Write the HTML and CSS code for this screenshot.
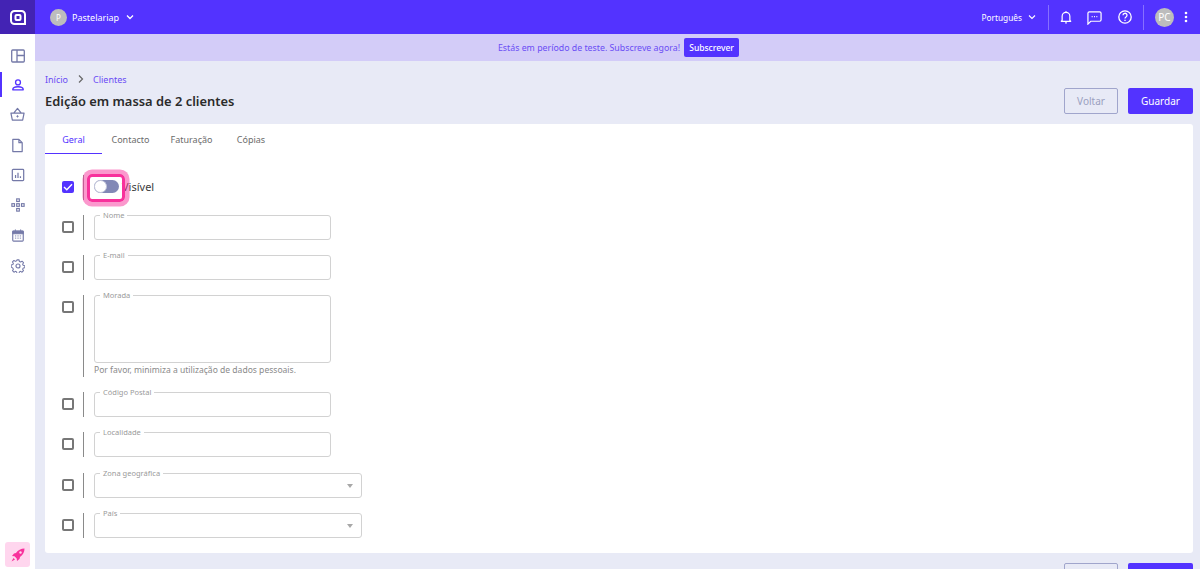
FILE: index.html
```html
<!DOCTYPE html>
<html lang="pt">
<head>
    <meta charset="UTF-8">
    <meta name="viewport" content="width=device-width, initial-scale=1.0">
    <title>Clientes</title>
    <link rel="stylesheet" href="styles.css">
</head>
<body>
    <header class="topbar">
        <div class="logo">
            <svg width="16" height="15" viewBox="0 0 16 15"><path d="M4.500 1h7A3.500 3.500 0 0 1 15 4.500V14H4.500A3.500 3.500 0 0 1 1 10.500v-6A3.500 3.500 0 0 1 4.500 1z" fill="none" stroke="#fff" stroke-width="2"/><rect x="5.500" y="5" width="5" height="5" rx="1" fill="none" stroke="#fff" stroke-width="2"/></svg>
        </div>
        <div class="store">
            <span class="avatar avatar-small">P</span>
            <span>Pastelariap</span>
            <svg class="chevron" width="10" height="10" viewBox="0 0 10 10"><path d="M2 3.500l3 3 3-3" fill="none" stroke="#fff" stroke-width="1.300"/></svg>
        </div>
        <div class="topbar-right">
            <span class="lang">Português</span>
            <svg class="chevron lang-chevron" width="10" height="10" viewBox="0 0 10 10"><path d="M2 3.500l3 3 3-3" fill="none" stroke="#fff" stroke-width="1.100"/></svg>
            <span class="divider"></span>
            <svg class="top-icon" width="12" height="14" viewBox="0 0 14 16"><path d="M2.500 12V7a4.500 4.500 0 0 1 9 0v5l1 1h-11z" fill="none" stroke="#fff" stroke-width="1.400" stroke-linejoin="round"/><path d="M6 14.800h2M7 1v1" stroke="#fff" stroke-width="1.400"/></svg>
            <svg class="top-icon" width="15" height="15" viewBox="0 0 16 16"><path d="M2.500 2h11A1.500 1.500 0 0 1 15 3.500v7a1.500 1.500 0 0 1-1.500 1.500H4l-3 3V3.500A1.500 1.500 0 0 1 2.500 2z" fill="none" stroke="#fff" stroke-width="1.300"/><path d="M5 7h1M7.500 7h1M10 7h1" stroke="#fff" stroke-width="1.300"/></svg>
            <svg class="top-icon top-icon-last" width="16" height="16" viewBox="0 0 16 16"><circle cx="8" cy="8" r="6.200" fill="none" stroke="#fff" stroke-width="1.300"/><path d="M6 6.300a2 2 0 1 1 3 1.700c-.7.400-1 .8-1 1.500" fill="none" stroke="#fff" stroke-width="1.300"/><path d="M8 10.800v1.200" stroke="#fff" stroke-width="1.300"/></svg>
            <span class="divider divider-user"></span>
            <span class="avatar avatar-user">PC</span>
            <svg class="dots" width="4" height="12" viewBox="0 0 4 12"><circle cx="2" cy="2" r="1.300" fill="#fff"/><circle cx="2" cy="6" r="1.300" fill="#fff"/><circle cx="2" cy="10" r="1.300" fill="#fff"/></svg>
        </div>
    </header>

    <div class="layout">
        <nav class="sidebar">
            <a class="nav-item nav-first"><svg width="14" height="14" viewBox="0 0 14 14"><rect x=".700" y="1" width="12.600" height="12" rx="1" fill="none" stroke="#7479a8" stroke-width="1.300"/><path d="M6 1v12M6 6.500h7.300" stroke="#7479a8" stroke-width="1.300"/></svg></a>
            <a class="nav-item active"><svg width="14" height="14" viewBox="0 0 16 16"><circle cx="8" cy="5" r="2.800" fill="none" stroke="#5333ff" stroke-width="1.500"/><path d="M2 13.500c0-2.500 2.500-3.500 6-3.500s6 1 6 3.500z" fill="none" stroke="#5333ff" stroke-width="1.500" stroke-linejoin="round"/></svg></a>
            <a class="nav-item"><svg width="15" height="15" viewBox="0 0 16 16"><path d="M1 6.500h14l-1.500 7.500h-11zM4 6.500L8 1.500l4 5" fill="none" stroke="#7479a8" stroke-width="1.300" stroke-linejoin="round"/><path d="M6.800 10h2.400M8 8.800v2.400" stroke="#7479a8"/></svg></a>
            <a class="nav-item"><svg width="15" height="15" viewBox="0 0 16 16"><path d="M3 1.500h6.500L13 5v9.500H3zM9.500 1.500V5H13" fill="none" stroke="#7479a8" stroke-width="1.300" stroke-linejoin="round"/></svg></a>
            <a class="nav-item"><svg width="14" height="14" viewBox="0 0 16 16"><rect x="1.500" y="1.500" width="13" height="13" rx="1" fill="none" stroke="#7479a8" stroke-width="1.400"/><path d="M5.200 11.500V8M8 11.500v-6M10.800 11.500V9.500" stroke="#7479a8" stroke-width="1.400"/></svg></a>
            <a class="nav-item"><svg width="14" height="14" viewBox="0 0 16 16"><g fill="none" stroke="#7479a8" stroke-width="1.300"><rect x="6.500" y="1" width="3" height="3"/><rect x="1" y="6.500" width="3" height="3"/><rect x="6.500" y="6.500" width="3" height="3"/><rect x="12" y="6.500" width="3" height="3"/><rect x="6.500" y="12" width="3" height="3"/></g></svg></a>
            <a class="nav-item"><svg width="14" height="15" viewBox="0 0 16 16"><rect x="2" y="3" width="12" height="11.500" rx="1" fill="none" stroke="#7479a8" stroke-width="1.300"/><path d="M2 3h12v3H2zM5 1v2M11 1v2" fill="#7479a8" stroke="#7479a8"/><path d="M4.500 8.500h1.500M7.300 8.500h1.500M10 8.500h1.500M4.500 11h1.500M7.300 11h1.500M10 11h1.500" stroke="#7479a8"/></svg></a>
            <a class="nav-item"><svg width="14" height="14" viewBox="0 0 16 16"><circle cx="8" cy="8" r="2.300" fill="none" stroke="#7479a8" stroke-width="1.300"/><path d="M6.800 1h2.400l.4 1.900 1.300.6 1.700-1 1.700 1.700-1 1.700.6 1.300 1.900.4v2.400l-1.900.4-.6 1.300 1 1.700-1.700 1.700-1.700-1-1.300.6-.4 1.900H6.800l-.4-1.900-1.300-.6-1.700 1-1.700-1.700 1-1.700-.6-1.300L.2 9.200V6.800l1.900-.4.600-1.300-1-1.700 1.700-1.700 1.700 1 1.300-.6z" fill="none" stroke="#7479a8" stroke-width="1.200" stroke-linejoin="round"/></svg></a>
            <div class="rocket">
                <svg width="14" height="14" viewBox="0 0 14 14"><path d="M13.500.5c-3.500 0-6.500 1.500-8.500 4.500L3 5.500 1 8l2.500.3 2.200 2.200L6 13l2.500-2 .5-2c3-2 4.500-5 4.500-8.500z" fill="#f8319c"/><path d="M2.500 10L.5 13.500 4 11.500z" fill="#f8319c"/><circle cx="9.500" cy="4.500" r="1.200" fill="#ffd6ee"/></svg>
            </div>
        </nav>

        <div class="page">
            <div class="trial">
                <span>Estás em período de teste. Subscreve agora!</span>
                <button class="subscribe">Subscrever</button>
            </div>

            <main class="content">
                <div class="breadcrumb">
                    <span>Início</span>
                    <svg width="8" height="8" viewBox="0 0 8 8"><path d="M2 .5L5.500 4 2 7.500" fill="none" stroke="#666" stroke-width="1.200"/></svg>
                    <span>Clientes</span>
                </div>
                <div class="title-row">
                    <h1>Edição em massa de 2 clientes</h1>
                    <div class="actions">
                        <button class="btn btn-back">Voltar</button>
                        <button class="btn btn-save">Guardar</button>
                    </div>
                </div>

                <section class="card">
                    <div class="tabs">
                        <span class="tab active">Geral</span>
                        <span class="tab">Contacto</span>
                        <span class="tab">Faturação</span>
                        <span class="tab">Cópias</span>
                    </div>
                    <div class="form">
                        <div class="row row-toggle">
                            <span class="check checked"><svg width="10" height="8" viewBox="0 0 10 8"><path d="M1 4l2.800 2.800L9 1.200" fill="none" stroke="#fff" stroke-width="1.400"/></svg></span>
                            <span class="sep"></span>
                            <span class="toggle"><span class="knob"></span></span>
                            <span class="toggle-label">Visível</span>
                            <span class="spot"></span>
                        </div>
                        <div class="row">
                            <span class="check"></span><span class="sep"></span>
                            <div class="field"><label>Nome</label></div>
                        </div>
                        <div class="row">
                            <span class="check"></span><span class="sep"></span>
                            <div class="field"><label>E-mail</label></div>
                        </div>
                        <div class="row row-tall">
                            <span class="check"></span><span class="sep"></span>
                            <div class="field-group">
                                <div class="field field-area"><label>Morada</label></div>
                                <p class="hint">Por favor, minimiza a utilização de dados pessoais.</p>
                            </div>
                        </div>
                        <div class="row">
                            <span class="check"></span><span class="sep"></span>
                            <div class="field"><label>Código Postal</label></div>
                        </div>
                        <div class="row row-loose">
                            <span class="check"></span><span class="sep"></span>
                            <div class="field"><label>Localidade</label></div>
                        </div>
                        <div class="row">
                            <span class="check"></span><span class="sep"></span>
                            <div class="field field-select"><label>Zona geográfica</label><i class="caret"></i></div>
                        </div>
                        <div class="row">
                            <span class="check"></span><span class="sep"></span>
                            <div class="field field-select"><label>País</label><i class="caret"></i></div>
                        </div>
                    </div>
                </section>

                <div class="actions actions-bottom">
                    <button class="btn btn-back">Voltar</button>
                    <button class="btn btn-save">Guardar</button>
                </div>
            </main>
        </div>
    </div>
</body>
</html>
```

FILE: styles.css
```css
* {
    box-sizing: border-box;
}

body {
    margin: 0;
    height: 100vh;
    overflow: hidden;
    display: flex;
    flex-direction: column;
    background: #e8eaf6;
    color: #2b2b2b;
    font-family: "Noto Sans", sans-serif;
    font-size: 9px;
}

/* Barra de cima */
.topbar {
    height: 34px;
    flex: none;
    display: flex;
    align-items: center;
    background: #5333ff;
    color: #fff;
}

.logo {
    width: 35px;
    height: 34px;
    display: flex;
    align-items: center;
    justify-content: center;
    background: #4323b4;
}

.store {
    display: flex;
    align-items: center;
    margin-left: 15px;
    font-size: 9px;
}

.avatar {
    display: flex;
    align-items: center;
    justify-content: center;
    border-radius: 50%;
    background: #bdbdbd;
    color: #fff;
}

.avatar-small {
    width: 17px;
    height: 17px;
    margin-right: 5px;
    font-size: 8px;
}

.chevron {
    margin-left: 6px;
}

.topbar-right {
    margin-left: auto;
    display: flex;
    align-items: center;
    padding-right: 12px;
}

.lang {
    font-size: 8.300px;
}

.lang-chevron {
    margin-left: 5px;
}

.divider {
    width: 1px;
    height: 25px;
    background: rgba(255, 255, 255, 0.3);
    margin: 0 11px;
}

.divider-user {
    margin: 0 11px 0 10px;
}

.top-icon {
    margin-right: 15px;
}

.top-icon-last {
    margin-right: 0;
}

.avatar-user {
    width: 19px;
    height: 19px;
    font-size: 10px;
    margin-right: 10px;
}

.dots {
    display: block;
}

.layout {
    flex: 1;
    min-height: 0;
    display: flex;
}

/* Menu lateral */
.sidebar {
    width: 35px;
    flex: none;
    display: flex;
    flex-direction: column;
    align-items: center;
    padding-top: 8px;
    gap: 5.200px;
    background: #fff;
}

.nav-item {
    width: 100%;
    height: 25px;
    display: flex;
    align-items: center;
    justify-content: center;
}

.nav-first {
    padding-top: 3px;
}

.nav-item.active {
    border-left: 2px solid #5333ff;
    padding-right: 2px;
}

.rocket {
    margin-top: auto;
    margin-bottom: 2px;
    width: 25px;
    height: 25px;
    display: flex;
    align-items: center;
    justify-content: center;
    border-radius: 3px;
    background: #ffd6ee;
}

.page {
    flex: 1;
    min-width: 0;
}

/* Aviso de teste */
.trial {
    height: 27px;
    display: flex;
    align-items: center;
    justify-content: center;
    gap: 4px;
    padding-left: 2px;
    background: #d3ccf8;
    color: #6a4cf5;
    font-size: 8.800px;
}

.subscribe {
    height: 19px;
    width: 55px;
    padding: 0;
    border: none;
    border-radius: 2px;
    background: #5333ff;
    color: #fff;
    font-family: inherit;
    font-size: 8.500px;
    font-weight: 500;
}

/* Contenido */
.content {
    padding: 12px 7px 0 10px;
}

.breadcrumb {
    display: flex;
    align-items: center;
    gap: 8.500px;
    height: 12px;
    color: #6a4cf5;
    font-size: 9px;
}

.title-row {
    display: flex;
    justify-content: space-between;
    align-items: center;
    height: 26px;
    margin-top: 3px;
}

h1 {
    margin: 0;
    font-size: 12.900px;
    font-weight: 600;
    color: #2b2b2b;
}

.actions {
    display: flex;
    gap: 10px;
}

.btn {
    height: 26px;
    padding: 0;
    border-radius: 2px;
    font-family: inherit;
    font-size: 10px;
}

.btn-back {
    width: 54px;
    border: 1px solid #a0a5cc;
    background: transparent;
    color: #9a9fc0;
}

.btn-save {
    width: 65px;
    border: none;
    background: #5333ff;
    color: #fff;
}

.actions-bottom {
    justify-content: flex-end;
    margin-top: 10px;
}

.card {
    margin-top: 10px;
    height: 429px;
    background: #fff;
    border-radius: 3px;
}

.tabs {
    display: flex;
    height: 30px;
    color: #6b6b6b;
    font-size: 9px;
}

.tab {
    width: 57px;
    display: flex;
    align-items: center;
    justify-content: center;
    padding-top: 1px;
    border-bottom: 1px solid transparent;
    white-space: nowrap;
}

.tab:nth-child(3) {
    width: 65px;
}

.tab:nth-child(4) {
    width: 54px;
}

.tab.active {
    color: #5333ff;
    border-bottom-color: #5333ff;
}

.form {
    padding: 26px 0 0 17px;
}

.row {
    position: relative;
    display: flex;
    align-items: flex-start;
    margin-bottom: 15px;
}

.row-toggle {
    height: 20px;
    margin-top: -3px;
    margin-bottom: 18px;
    align-items: center;
}

.row-loose {
    margin-bottom: 16px;
}

.check {
    width: 12px;
    height: 12px;
    flex: none;
    margin-top: 6px;
    display: flex;
    align-items: center;
    justify-content: center;
    border: 2px solid #777;
    border-radius: 2px;
    background: #fff;
}

.row-toggle .check {
    margin-top: 0;
}

.check.checked {
    border: none;
    background: #5333ff;
}

.sep {
    width: 1px;
    height: 25px;
    flex: none;
    margin: 0 10px 0 9px;
    background: #8a8a8a;
}

.row-tall .sep {
    height: 82px;
}

.toggle {
    width: 25px;
    height: 13px;
    margin-bottom: 1px;
    position: relative;
    border-radius: 7px;
    background: #8288b6;
}

.knob {
    position: absolute;
    left: 0;
    top: 0;
    width: 13px;
    height: 13px;
    border-radius: 50%;
    background: #fff;
    border: 1px solid #c5c8dc;
}

.toggle-label {
    margin-left: 3px;
    margin-bottom: 2px;
    font-size: 11px;
    color: #3c3c3c;
}

/* Resalte sobre el interruptor */
.spot {
    position: absolute;
    left: 25px;
    top: -3px;
    width: 38px;
    height: 28px;
    border: 3px solid #f8319c;
    border-radius: 5px;
    box-shadow: 0 0 0 4.500px rgba(248, 49, 156, 0.5);
}

.field {
    position: relative;
    width: 237px;
    height: 25px;
    border: 1px solid #d2d2d2;
    border-radius: 3px;
    background: #fff;
}

.field-area {
    height: 68px;
}

.field-select {
    width: 268px;
}

.field label {
    position: absolute;
    left: 5px;
    top: -6px;
    padding: 0 3px;
    background: #fff;
    color: #9a9a9a;
    font-size: 7.500px;
    line-height: 10px;
    white-space: nowrap;
}

.caret {
    position: absolute;
    right: 8px;
    top: 10px;
    width: 0;
    height: 0;
    border-left: 3.500px solid transparent;
    border-right: 3.500px solid transparent;
    border-top: 4px solid #a8a8a8;
}

.hint {
    margin: 1px 0 0;
    font-size: 8.550px;
    line-height: 12px;
    color: #8a8a8a;
}
```
